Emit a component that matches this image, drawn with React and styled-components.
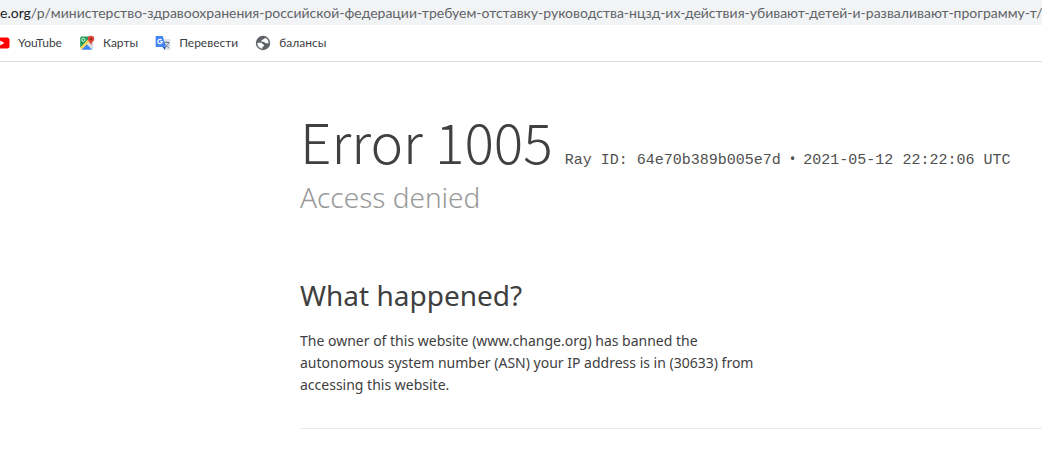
import React from "react";
import styled, { createGlobalStyle } from "styled-components";

const GlobalStyle = createGlobalStyle`
  * { box-sizing: border-box; }
  body {
    margin: 0;
    background: #fff;
    color: #404040;
    font-family: "Noto Sans", "Open Sans", sans-serif;
    overflow-x: hidden;
  }
  h1, h2, p { margin: 0; font-weight: 400; }
`;

const AddressBar = styled.div`
  display: flex;
  align-items: center;
  height: 25px;
  overflow: hidden;
  background: #f1f3f4;
  font-family: Lato, "Open Sans", sans-serif;
  font-size: 14px;
  line-height: 20px;
`;

const Host = styled.label`
  color: #202124;
`;

const UrlPath = styled.input`
  flex: 1;
  min-width: 0;
  height: 20px;
  padding: 0;
  border: 0;
  outline: 0;
  background: transparent;
  color: #5f6368;
  font: inherit;
`;

const BookmarksBar = styled.nav`
  display: flex;
  align-items: center;
  gap: 17px;
  height: 37px;
  overflow: hidden;
  border-bottom: 1px solid #dadce0;
`;

const Bookmark = styled.a`
  display: flex;
  flex: none;
  align-items: center;
  gap: 8px;
  color: #3c4043;
  font-family: Lato, "Open Sans", sans-serif;
  font-size: 12px;
  line-height: 16px;
  text-decoration: none;

  &:first-child { margin-left: -6px; }
  svg { display: block; flex: none; }
`;

const Page = styled.main`
  padding: 38px 0 0 300px;
`;

const TitleRow = styled.div`
  display: flex;
  align-items: baseline;
  gap: 12px;
  white-space: nowrap;
`;

const Title = styled.h1`
  font-family: "Noto Sans CJK SC", "Open Sans", sans-serif;
  && { font-weight: 300; }
  font-size: 55px;
  line-height: 80px;
`;

const RayId = styled.span`
  color: #505050;
  font-family: "Liberation Mono", monospace;
  font-size: 15px;
  line-height: 20px;
`;

const Bullet = styled.span`
  margin-right: 8px;
  font-family: "Noto Sans", sans-serif;
`;

const Subtitle = styled.h2`
  && { font-weight: 300; }
  color: #999;
  font-size: 28px;
  line-height: 34px;
`;

const Section = styled.section`
  padding: 62px 0 32px;
  border-bottom: 1px solid #ebebeb;
`;

const SectionTitle = styled.h2`
  font-size: 28px;
  line-height: 38px;
`;

const Paragraph = styled.p`
  max-width: 464px;
  padding-top: 16px;
  font-size: 14px;
  line-height: 22px;
`;

const YouTubeIcon = () => (
  <svg width="16" height="16" viewBox="0 0 16 16" aria-hidden="true">
    <rect x="0" y="2.5" width="15.5" height="11" rx="2.5" fill="#f00" />
    <path d="M6.2 5.6 10.4 8 6.2 10.4Z" fill="#fff" />
  </svg>
);

const MapsIcon = () => (
  <svg width="16" height="16" viewBox="0 0 16 16" aria-hidden="true">
    <path d="M2.500 1.500H12L1.200 13V2.800Z" fill="#1f9d58" />
    <path d="M1.200 12.400 10.200 3.400l2 2-9.500 9.200H2.200Z" fill="#f7d154" />
    <path d="m2.600 14.700 5.400-5.400 5.400 5.400Z" fill="#4285f4" />
    <path d="m8 9.300 3.200-3.200 3 2.500v5.400l-.8.700Z" fill="#d5dbe3" />
    <circle cx="4.400" cy="4.800" r="1.600" fill="none" stroke="#e6f4ea" strokeWidth="1" />
    <path d="M12 .8a3.200 3.200 0 0 0-3.200 3.200c0 2.500 2.600 3 3.200 6.400.6-3.400 3.200-3.900 3.200-6.400A3.200 3.200 0 0 0 12 .8Z" fill="#db4437" />
    <circle cx="12" cy="4" r="1" fill="#8c251b" />
  </svg>
);

const TranslateIcon = () => (
  <svg width="16" height="16" viewBox="0 0 16 16" aria-hidden="true">
    <path d="M6 4h8.4c.6 0 1 .4 1 1v9c0 .6-.4 1-1 1H9.8Z" fill="#dfe2e7" />
    <path d="M8.600 7.500h6M11.600 6.300v1.200M13.700 7.500c-.4 2-1.800 3.700-3.700 4.600M10 8.800c.7 1.500 2 2.800 3.900 3.700" fill="none" stroke="#6b7f99" strokeWidth="1" />
    <path d="M7.500 12h3.200l-1 3Z" fill="#3059b5" />
    <path d="M1.600 1h6.200l3 11H1.600c-.6 0-1-.4-1-1V2c0-.6.4-1 1-1Z" fill="#4285f4" />
    <path d="M6.600 5A2.200 2.200 0 1 0 7.200 6.700H5.200" fill="none" stroke="#fff" strokeWidth="1.200" />
  </svg>
);

const GlobeIcon = () => (
  <svg width="16" height="16" viewBox="0 0 16 16" aria-hidden="true">
    <circle cx="8" cy="8" r="7.200" fill="#5f6368" />
    <path d="M2.400 7.900c1.700-.2 3.300-.2 4.200.2.900.4.900 1.300 1.700 1.500 1 .3 1.100 1.300.3 1.700-.8.400-1.200.8-1.200 2.200C4.400 13.300 2.300 11 2.400 7.900Z" fill="#fff" />
    <path d="M9.800 2.700c.1 1-.5 1.400-1.500 1.500-.9.100-.8 1.100-1.700 1.300-.7.200-.6 1.100.2 1.200 1.300.1 2.500-.1 3 .7.500.9 1.600 1 3.800.8C13.700 5.500 12.200 3.400 9.800 2.700Z" fill="#fff" />
  </svg>
);

const bookmarks = [
  { label: "YouTube", href: "#youtube", Icon: YouTubeIcon },
  { label: "Карты", href: "#maps", Icon: MapsIcon },
  { label: "Перевести", href: "#translate", Icon: TranslateIcon },
  { label: "балансы", href: "#balances", Icon: GlobeIcon },
];

export default function App() {
  return (
    <>
      <GlobalStyle />
      <AddressBar>
        <Host htmlFor="url">e.org</Host>
        <UrlPath
          id="url"
          type="text"
          spellCheck={false}
          defaultValue="/p/министерство-здравоохранения-российской-федерации-требуем-отставку-руководства-нцзд-их-действия-убивают-детей-и-разваливают-программу-т/"
        />
      </AddressBar>
      <BookmarksBar>
        {bookmarks.map(({ label, href, Icon }) => (
          <Bookmark key={label} href={href}>
            <Icon />
            {label}
          </Bookmark>
        ))}
      </BookmarksBar>
      <Page>
        <header>
          <TitleRow>
            <Title>Error 1005</Title>
            <RayId>
              Ray ID: 64e70b389b005e7d <Bullet>•</Bullet>2021-05-12 22:22:06 UTC
            </RayId>
          </TitleRow>
          <Subtitle>Access denied</Subtitle>
        </header>
        <Section>
          <SectionTitle>What happened?</SectionTitle>
          <Paragraph>
            The owner of this website (www.change.org) has banned the autonomous
            system number (ASN) your IP address is in (30633) from accessing
            this website.
          </Paragraph>
        </Section>
      </Page>
    </>
  );
}
